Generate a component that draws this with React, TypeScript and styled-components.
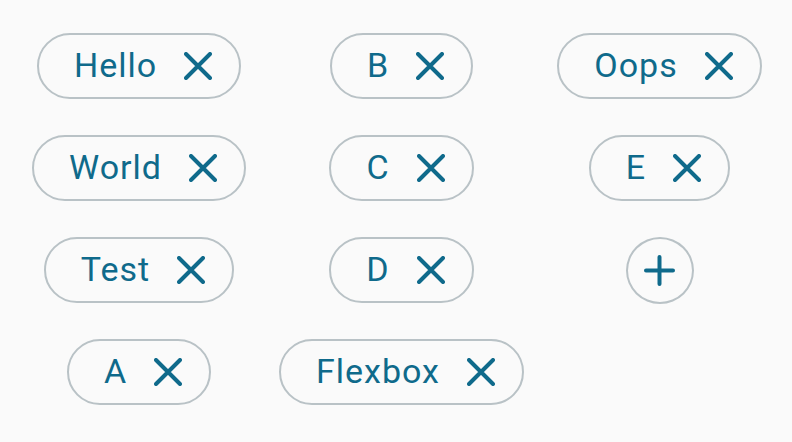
import React from "react";
import styled, { createGlobalStyle } from "styled-components";

const GlobalStyle = createGlobalStyle`
  html, body {
    margin: 0;
    padding: 0;
    background: #fafafa;
  }
  body {
    font-family: Roboto, "Noto Sans", sans-serif;
  }
`;

const Page = styled.div`
  width: 792px;
  height: 442px;
  box-sizing: border-box;
  padding: 33px 0 0 33px;
  display: flex;
  flex-direction: row;
  align-items: flex-start;
  gap: 35px;
  background: #fafafa;
`;

const Column = styled.div<{ $width: number }>`
  width: ${(p) => p.$width}px;
  display: flex;
  flex-direction: column;
  align-items: center;
  gap: 36px;
`;

const Chip = styled.div`
  height: 66px;
  box-sizing: border-box;
  border: 2px solid #b9c2c6;
  border-radius: 33px;
  padding: 0 27px 0 35px;
  display: flex;
  align-items: center;
  gap: 27px;
  color: #0f6a8b;
`;

const Label = styled.span`
  font-family: Roboto, "Noto Sans", sans-serif;
  font-size: 34px;
  letter-spacing: 1px;
  line-height: 40px;
  margin-bottom: 3px;
  white-space: nowrap;
`;

const IconBox = styled.span`
  width: 28px;
  height: 28px;
  display: flex;
  align-items: center;
  justify-content: center;
`;

const AddButton = styled.div`
  width: 68px;
  height: 67px;
  box-sizing: border-box;
  border: 2px solid #b9c2c6;
  border-radius: 50%;
  display: flex;
  align-items: center;
  justify-content: center;
  color: #0f6a8b;
`;

const CloseIcon = () => (
  <svg width="28" height="28" viewBox="0 0 28 28" fill="none">
    <path
      d="M2 2 L26 26 M26 2 L2 26"
      stroke="currentColor"
      strokeWidth="4"
      strokeLinecap="round"
    />
  </svg>
);

const PlusIcon = () => (
  <svg width="31" height="31" viewBox="0 0 31 31" fill="none">
    <path
      d="M2 15.5 L29 15.5 M15.5 2 L15.5 29"
      stroke="currentColor"
      strokeWidth="4"
      strokeLinecap="round"
    />
  </svg>
);

const TagChip = ({ label }: { label: string }) => (
  <Chip>
    <Label>{label}</Label>
    <IconBox>
      <CloseIcon />
    </IconBox>
  </Chip>
);

const columns: { width: number; items: string[]; add?: boolean }[] = [
  { width: 212, items: ["Hello", "World", "Test", "A"] },
  { width: 243, items: ["B", "C", "D", "Flexbox"] },
  { width: 203, items: ["Oops", "E"], add: true },
];

export default function App() {
  return (
    <>
      <GlobalStyle />
      <Page>
        {columns.map((col, i) => (
          <Column key={i} $width={col.width}>
            {col.items.map((t) => (
              <TagChip key={t} label={t} />
            ))}
            {col.add && (
              <AddButton>
                <PlusIcon />
              </AddButton>
            )}
          </Column>
        ))}
      </Page>
    </>
  );
}
